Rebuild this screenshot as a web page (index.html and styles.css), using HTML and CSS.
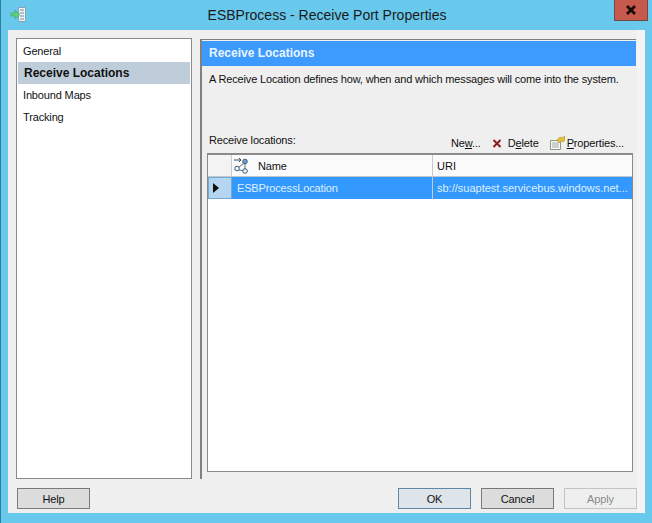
FILE: index.html
```html
<!DOCTYPE html>
<html lang="en">
<head>
<meta charset="utf-8">
<title>ESBProcess - Receive Port Properties</title>
<link rel="stylesheet" href="styles.css">
</head>
<body>
<div class="window">
  <header class="titlebar">
    <svg class="app-icon" width="18" height="18" viewBox="0 0 18 18">
      <path d="M8.500 2.500h7v14h-7z" fill="#eef3f6" stroke="#8aa3b2"/>
      <path d="M10 5h4M10 8h4M10 11h4M10 14h4" stroke="#6f8ea3"/>
      <path d="M1 8h4V5l5 4.500-5 4.500v-3H1z" fill="#5fcf7a" stroke="#3aa06a" stroke-width=".6"/>
    </svg>
    <h1 class="title">ESBProcess - Receive Port Properties</h1>
    <button class="close" aria-label="Close">
      <svg width="12" height="10" viewBox="0 0 12 10"><path d="M2 1l8 8M10 1l-8 8" stroke="#1a0a08" stroke-width="2.800"/></svg>
    </button>
  </header>
  <div class="client">
    <div class="main">
      <nav class="sidebar">
        <div class="nav-item">General</div>
        <div class="nav-item selected">Receive Locations</div>
        <div class="nav-item">Inbound Maps</div>
        <div class="nav-item">Tracking</div>
      </nav>
      <section class="panel">
        <div class="panel-head">Receive Locations</div>
        <p class="desc">A Receive Location defines how, when and which messages will come into the system.</p>
        <div class="toolbar">
          <span class="toolbar-label">Receive locations:</span>
          <div class="tools">
            <span class="tool"><span>Ne<u>w</u>...</span></span>
            <span class="tool">
              <svg width="12" height="12" viewBox="0 0 12 12"><path d="M2.500 3l7 7M9.500 3l-7 7" stroke="#8e1c1c" stroke-width="2"/></svg>
              <span>D<u>e</u>lete</span>
            </span>
            <span class="tool tool-props">
              <svg width="16" height="16" viewBox="0 0 16 16">
                <path d="M1.500 5.500h10v9h-10z" fill="#fbfbf4" stroke="#8f9a7c"/>
                <path d="M3 8h7M3 10h7M3 12h7" stroke="#9aa7b0"/>
                <path d="M8 5l3-3 2 1 3-2v4l-2 2-2-1-2 2z" fill="#e6c23a" stroke="#a4872a" stroke-width=".6"/>
              </svg>
              <span><u>P</u>roperties...</span>
            </span>
          </div>
        </div>
        <div class="grid">
          <div class="grid-row grid-head">
            <div class="cell-mark"></div>
            <div class="cell-name head-name">
              <svg width="16" height="18" viewBox="0 0 16 18" fill="none">
                <path d="M1 3h7M6 1l2 2-2 2" stroke="#2c4a5e"/>
                <path d="M12 5v8M5 11l6-5M6 13l4 .500" stroke="#55707f"/>
                <circle cx="12" cy="4.500" r="2.300" fill="#6f9fd0" stroke="#3b5d7a"/>
                <circle cx="4" cy="11.500" r="2.300" fill="#eef2f4" stroke="#3b5d7a"/>
                <circle cx="12" cy="14" r="2.300" fill="#eef2f4" stroke="#3b5d7a"/>
              </svg>
              <span class="name-label">Name</span>
            </div>
            <div class="cell-uri">URI</div>
          </div>
          <div class="grid-row grid-selected">
            <div class="cell-mark mark-current"><span class="arrow"></span></div>
            <div class="cell-name">ESBProcessLocation</div>
            <div class="cell-uri">sb://suaptest.servicebus.windows.net...</div>
          </div>
        </div>
      </section>
    </div>
    <footer class="footer">
      <button class="btn">Help</button>
      <div class="actions">
        <button class="btn btn-ok">OK</button>
        <button class="btn">Cancel</button>
        <button class="btn btn-off">Apply</button>
      </div>
    </footer>
  </div>
</div>
</body>
</html>
```
FILE: styles.css
```css
* { box-sizing: border-box; }
html, body { margin: 0; padding: 0; }
body {
  width: 652px;
  height: 523px;
  overflow: hidden;
  font-family: "Liberation Sans", Arial, sans-serif;
  font-size: 11px;
  letter-spacing: -0.15px;
  color: #111;
}
.window {
  width: 652px;
  height: 523px;
  display: flex;
  flex-direction: column;
  background: #69c9ec;
  border-left: 1px solid #2f7f9e;
  padding: 0 7px 10px 7px;
}
.titlebar {
  height: 30px;
  flex: none;
  display: flex;
  align-items: center;
  position: relative;
}
.app-icon { margin: -3px 0 0 2px; flex: none; }
.title {
  flex: 1;
  margin: -1px 0 0;
  text-align: center;
  font-size: 14px;
  font-weight: 400;
  letter-spacing: 0;
  color: #1a1a1a;
  padding-right: 19px;
}
.close {
  position: absolute;
  top: 0;
  right: -3px;
  width: 34px;
  height: 21px;
  padding: 0;
  background: #c75a4c;
  border: 1px solid #6e4a46;
  border-top: 0;
  display: flex;
  align-items: center;
  justify-content: center;
}
.client {
  flex: 1;
  background: #efefef;
  border-right: 8px solid #f4f4f4;
  display: flex;
  flex-direction: column;
  padding: 8px 0 0 8px;
  min-height: 0;
}
.main { height: 441px; flex: none; display: flex; gap: 8px; }
.sidebar {
  width: 176px;
  flex: none;
  background: #fff;
  border: 1px solid #8a8a8a;
  padding: 1px;
}
.nav-item {
  height: 22px;
  line-height: 22px;
  padding-left: 5px;
}
.nav-item.selected {
  background: #bfcddb;
  font-size: 12px;
  font-weight: 700;
  letter-spacing: 0;
  padding-left: 6px;
}
.panel {
  flex: 1;
  min-width: 0;
  margin: 1px 1px 0 0;
  border-left: 2px solid #808080;
  border-top: 1px solid #808080;
  padding-top: 1px;
  display: flex;
  flex-direction: column;
}
.panel-head {
  height: 25px;
  line-height: 25px;
  background: #3d9bff;
  color: #e9f4ff;
  font-size: 12px;
  font-weight: 700;
  letter-spacing: 0;
  padding-left: 7px;
}
.desc { margin: 6px 0 0 7px; line-height: 15px; height: 54px; }
.toolbar {
  display: flex;
  align-items: flex-end;
  justify-content: space-between;
  height: 27px;
  margin-left: 7px;
}
.toolbar-label { line-height: 15px; margin-bottom: 5px; }
.tools { display: flex; align-items: center; gap: 10px; padding-right: 12px; margin-bottom: 1px; }
.tool { display: flex; align-items: center; gap: 5px; height: 18px; }
.tool-props { gap: 2px; }
.grid {
  height: 319px;
  margin: 0 3px 0 5px;
  background: #fff;
  border: 1px solid #8a8a8a;
  border-top: 2px solid #8a8a8a;
}
.grid-row { display: flex; height: 22px; }
.grid-head { background: #fbfbfb; border-bottom: 1px solid #c2c8cc; }
.cell-mark { width: 24px; flex: none; border-right: 1px solid #c5cdd3; background: #f3f3f3; }
.cell-name {
  width: 201px;
  flex: none;
  display: flex;
  align-items: center;
  padding-left: 5px;
  border-right: 1px solid #c5cdd3;
}
.head-name { padding-left: 1px; }
.name-label { margin-left: 9px; }
.cell-uri { flex: 1; display: flex; align-items: center; padding-left: 4px; letter-spacing: 0; white-space: nowrap; overflow: hidden; }
.grid-selected { background: #3399ff; color: #dff0ff; }
.mark-current {
  background: #b5d5f0;
  border: 1px solid #6fa9d4;
  display: flex;
  align-items: center;
  padding-left: 4px;
}
.arrow {
  border-left: 6px solid #111;
  border-top: 5px solid transparent;
  border-bottom: 5px solid transparent;
}
.footer {
  flex: 1;
  display: flex;
  justify-content: space-between;
  align-items: flex-start;
  padding: 9px 0 0 1px;
}
.actions { display: flex; gap: 10px; }
.btn {
  width: 73px;
  height: 21px;
  padding: 0;
  background: #dcdcdc;
  border: 1px solid #7a7a7a;
  font: 11px "Liberation Sans", Arial, sans-serif;
  letter-spacing: -0.15px;
  color: #111;
}
.btn-ok { background: #dde4ea; border-color: #5f87a6; }
.btn-off { background: #efefef; border-color: #c4c4c4; color: #8a8a8a; }
```
